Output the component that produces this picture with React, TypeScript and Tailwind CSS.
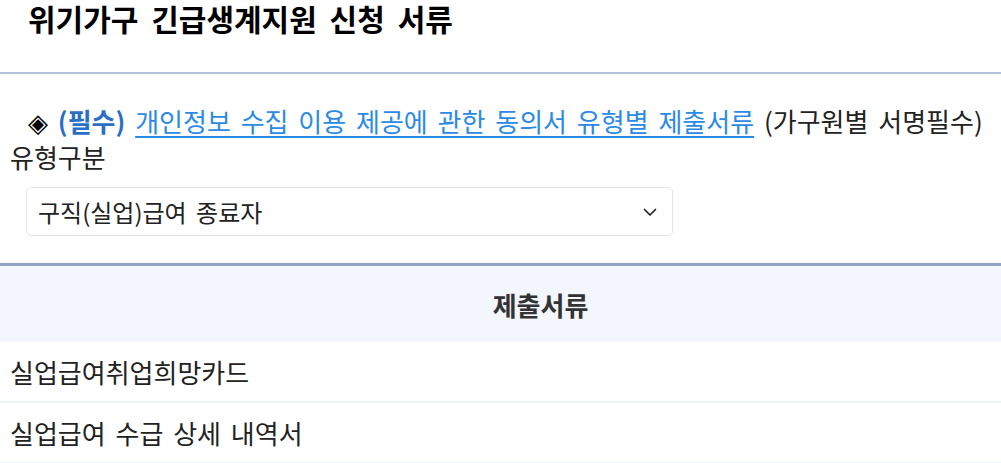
import React from 'react';

const rows = ['실업급여취업희망카드', '실업급여 수급 상세 내역서'];

export default function App() {
  return (
    <div className="w-full min-h-screen bg-white text-[#222] overflow-hidden [word-spacing:4px]" style={{ fontFamily: '"Noto Sans CJK KR", "Noto Sans", sans-serif' }}>
      {/* Title */}
      <div className="h-[74px] flex flex-col border-b-2 border-[#b0c4de]">
        <h1 className="pl-[28px] text-[30px] font-bold leading-[36px] text-black [word-spacing:6px]">위기가구 긴급생계지원 신청 서류</h1>
      </div>

      <div className="pt-[29px]">
        <p className="pl-[28px] text-[26px] leading-[36px] whitespace-nowrap">
          <span className="text-black">◈</span>{' '}
          <b className="text-[#2a6fc4]">(필수)</b>{' '}
          <a href="#" className="text-[#2b8ae6] underline underline-offset-[4px] decoration-[1.5px]">개인정보 수집 이용 제공에 관한 동의서 유형별 제출서류</a>{' '}
          <span>(가구원별 서명필수)</span>
        </p>
        <div className="pl-[10px] text-[26px] leading-[36px]">유형구분</div>

        <div className="mt-[12px] ml-[26px] w-[647px] h-[49px] border border-[#e3e5e8] rounded-[5px] flex items-center justify-between pl-[11px] pr-[14px]">
          <span className="text-[24px] text-[#222]">구직(실업)급여 종료자</span>
          <svg width="16" height="16" viewBox="0 0 16 16" fill="none" stroke="#222" strokeWidth="1.7" strokeLinecap="round" strokeLinejoin="round">
            <path d="M2.5 5.5L8 11l5.5-5.5" />
          </svg>
        </div>
      </div>

      {/* Document table */}
      <div className="mt-[27px] border-t-[3px] border-[#8ea4c4]">
        <div className="h-[76px] bg-[#f3f6fd] flex items-center justify-center pl-[80px]">
          <span className="text-[26px] font-bold text-[#333]">제출서류</span>
        </div>
        {rows.map((r) => (
          <div key={r} className="h-[61px] border-b-2 border-[#eef2f9] flex items-center pl-[10px] text-[26px] text-[#222]">
            {r}
          </div>
        ))}
      </div>
    </div>
  );
}
